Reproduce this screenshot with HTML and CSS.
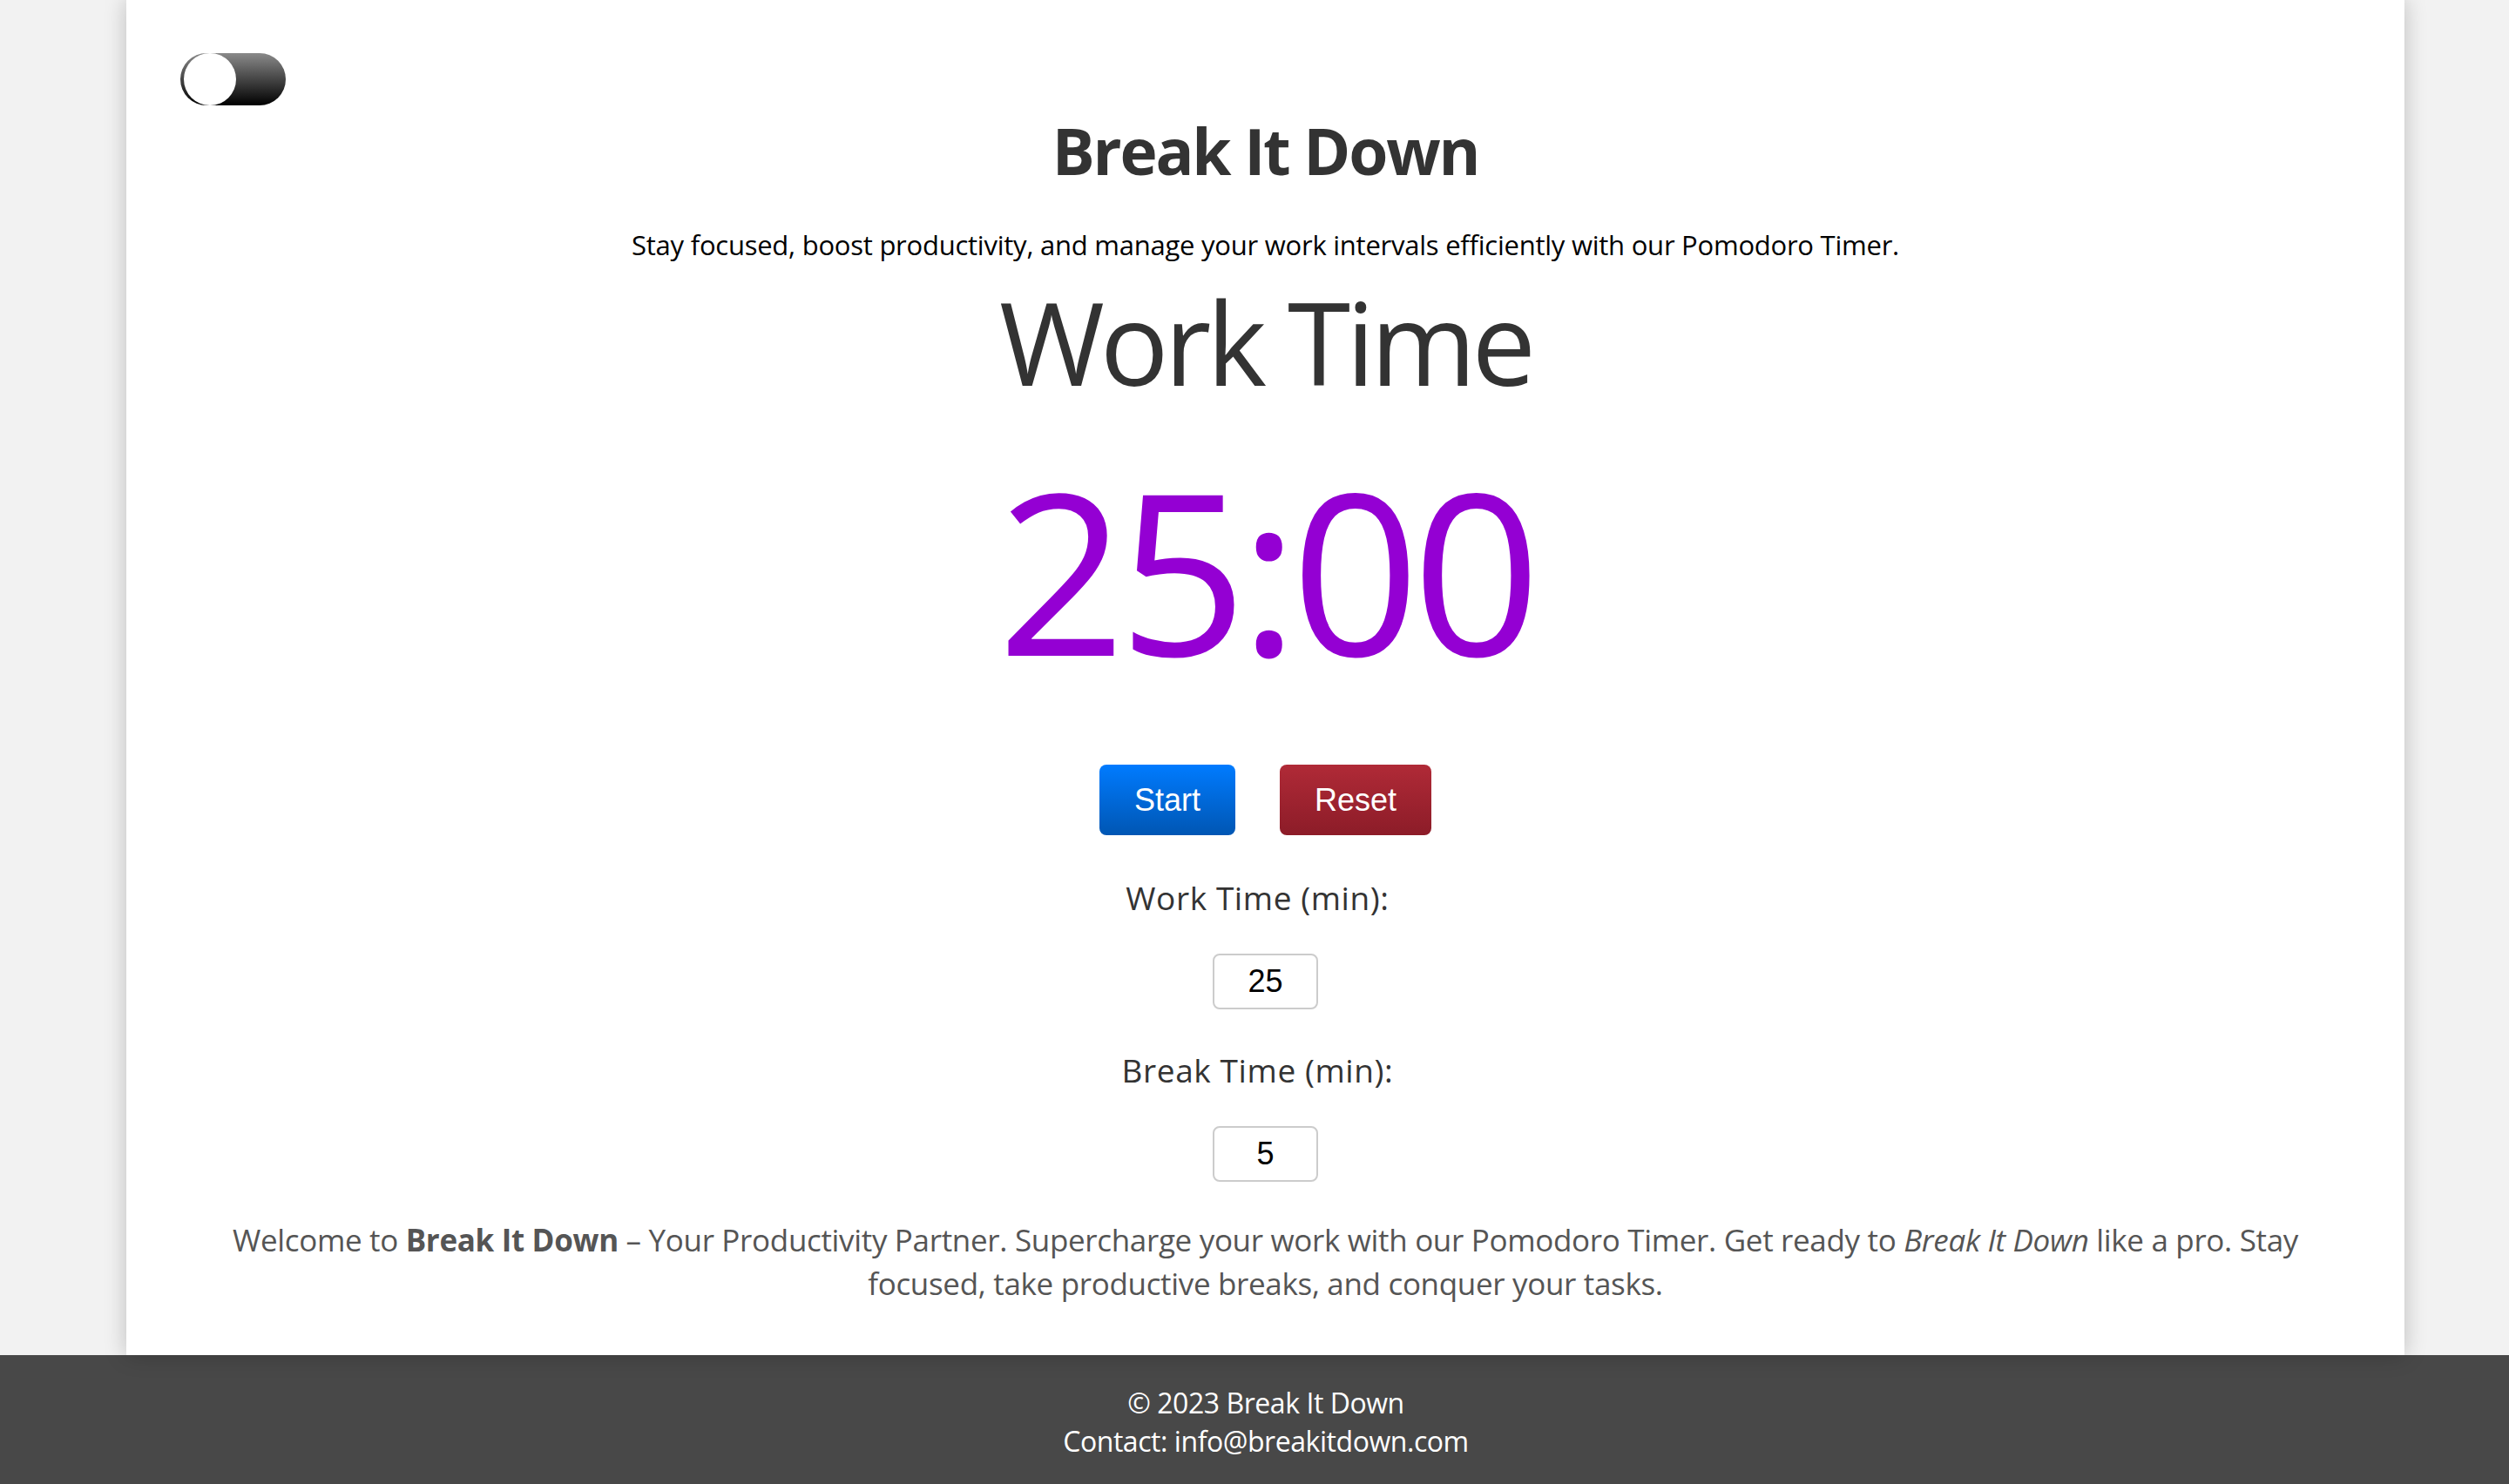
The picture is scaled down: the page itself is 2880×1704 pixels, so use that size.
FILE: index.html
```html
<!DOCTYPE html>
<html lang="en">
<head>
<meta charset="utf-8">
<title>Break It Down – Pomodoro Timer</title>
<link rel="stylesheet" href="styles.css">
</head>
<body>
  <main class="container">
    <label class="theme-switch" aria-label="Toggle dark mode">
      <input type="checkbox" class="theme-input">
      <span class="theme-track"><span class="theme-knob"></span></span>
    </label>

    <h1 class="title">Break It Down</h1>
    <p class="tagline">Stay focused, boost productivity, and manage your work intervals efficiently with our Pomodoro Timer.</p>

    <h2 class="mode">Work Time</h2>
    <div class="clock">25:00</div>

    <div class="controls">
      <button class="btn btn-start" type="button">Start</button>
      <button class="btn btn-reset" type="button">Reset</button>
    </div>

    <div class="setting">
      <label class="setting-label" for="work-minutes">Work Time (min):</label>
      <input class="setting-input" id="work-minutes" type="text" value="25">
    </div>
    <div class="setting">
      <label class="setting-label" for="break-minutes">Break Time (min):</label>
      <input class="setting-input" id="break-minutes" type="text" value="5">
    </div>

    <p class="intro">Welcome to <strong>Break It Down</strong> – Your Productivity Partner. Supercharge your work with our Pomodoro Timer. Get ready to <em>Break It Down</em> like a pro. Stay focused, take productive breaks, and conquer your tasks.</p>
  </main>

  <footer class="site-footer">
    <p class="footer-line">© 2023 Break It Down</p>
    <p class="footer-line">Contact: info@breakitdown.com</p>
  </footer>
</body>
</html>
```
FILE: styles.css
```css
html, body {
  margin: 0;
  padding: 0;
}

body {
  background: #f2f2f2;
  font-family: "Open Sans", "Noto Sans", sans-serif;
  color: #333;
}

.container {
  position: relative;
  z-index: 1;
  width: 2615px;
  margin: 0 120px 0 145px;
  box-sizing: border-box;
  padding: 61px 62px 57px;
  background: #fff;
  box-shadow: 0 0 24px rgba(0, 0, 0, 0.22);
  display: flex;
  flex-direction: column;
  align-items: center;
  text-align: center;
}

/* dark-mode switch */
.theme-switch {
  align-self: flex-start;
  display: block;
  width: 121px;
  height: 60px;
  cursor: pointer;
}

.theme-input {
  display: none;
}

.theme-track {
  display: flex;
  align-items: center;
  width: 100%;
  height: 100%;
  border-radius: 30px;
  background: linear-gradient(to bottom, #8a8a8a, #000);
  padding-left: 4px;
  box-sizing: border-box;
}

.theme-knob {
  display: block;
  width: 60px;
  height: 60px;
  border-radius: 50%;
  background: #fff;
}

.title {
  margin: 7px 0 0;
  font-size: 73px;
  line-height: 89px;
  font-weight: 700;
  color: #333;
  letter-spacing: -2.2px;
}

.tagline {
  margin: 43px 0 0;
  font-size: 31px;
  line-height: 43px;
  color: #000;
  letter-spacing: -0.24px;
}

.mode {
  margin: 9px 0 0;
  font-size: 131px;
  line-height: 160px;
  font-weight: 400;
  color: #333;
  letter-spacing: -5px;
}

.clock {
  margin-top: 24px;
  font-size: 258px;
  line-height: 314px;
  color: #9400d3;
  letter-spacing: -8.5px;
}

.controls {
  margin-top: 68px;
  display: flex;
  gap: 51px;
}

.btn {
  height: 81px;
  padding: 0 40px;
  border: none;
  border-radius: 8px;
  font-family: "Liberation Sans", Arial, sans-serif;
  font-size: 36px;
  color: #fff;
  cursor: pointer;
}

.btn-start {
  background: linear-gradient(to bottom, #007bff, #0056b3);
}

.btn-reset {
  background: linear-gradient(to bottom, #b02a37, #8c1c28);
}

.setting {
  margin-top: 45px;
  display: flex;
  flex-direction: column;
  align-items: center;
}

.setting + .setting {
  margin-top: 43px;
}

/* labels carry a trailing gap, so they sit a little left of centre */
.setting-label {
  padding-right: 18px;
  font-size: 37px;
  line-height: 53px;
  color: #333;
  letter-spacing: 0.6px;
}

.setting-input {
  margin-top: 38px;
  width: 121px;
  height: 64px;
  box-sizing: border-box;
  border: 2px solid #ccc;
  border-radius: 8px;
  text-align: center;
  font-family: "Liberation Sans", Arial, sans-serif;
  font-size: 36px;
  color: #000;
  background: #fff;
  padding: 0;
}

.intro {
  margin: 42px 0 0;
  font-size: 35px;
  line-height: 50px;
  color: #555;
  letter-spacing: -0.33px;
}

.site-footer {
  background: #484848;
  color: #fff;
  text-align: center;
  padding: 33px 0 27px 26px;
}

.footer-line {
  margin: 0;
  font-size: 32px;
  line-height: 44px;
  letter-spacing: -0.45px;
}
```
